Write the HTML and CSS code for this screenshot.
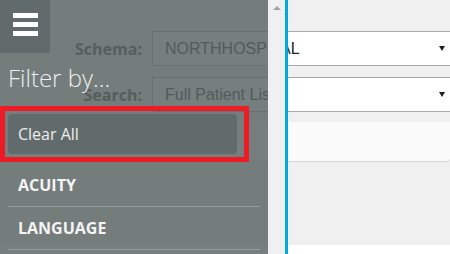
FILE: index.html
```html
<!DOCTYPE html>
<html>
<head>
    <title>Patient List</title>
    <meta charset="UTF-8">
    <link rel="stylesheet" href="styles.css">
</head>
<body>
    <div class="page">
        <div class="field">
            <label>Schema:</label>
            <div class="select"><span>NORTHHOSPITAL</span><span class="caret"></span></div>
        </div>
        <div class="field">
            <label>Search:</label>
            <div class="select"><span>Full Patient List</span><span class="caret"></span></div>
        </div>
        <div class="toolbar"></div>
        <div class="footer"></div>
    </div>

    <!-- filter drawer, sits over the page -->
    <div class="drawer">
        <div class="drawer-body">
            <div class="menu-btn">
                <span class="bar"></span>
                <span class="bar"></span>
                <span class="bar"></span>
            </div>
            <h2 class="drawer-title">Filter by...</h2>
            <div class="highlight">
                <button class="clear-btn">Clear All</button>
            </div>
            <ul class="filter-list">
                <li>ACUITY</li>
                <li>LANGUAGE</li>
            </ul>
        </div>
        <div class="scroll"><span class="scroll-up"></span></div>
        <div class="edge"></div>
    </div>
</body>
</html>
```

FILE: styles.css
```css
body {
    margin: 0;
    height: 254px;
    overflow: hidden;
    position: relative;
    background: #f0f0f0;
    font-family: "Open Sans", sans-serif;
}

.page {
    padding-top: 31px;
}
.field {
    display: flex;
    align-items: center;
    gap: 10px;
    margin-right: -10px;
    margin-bottom: 11px;
}
.field label {
    width: 142px;
    text-align: right;
    font-weight: 700;
    font-size: 16px;
    color: #333;
}
.select {
    flex: 1;
    height: 33px;
    border: 1px solid #a9a9a9;
    background: #fff;
    display: flex;
    align-items: center;
    justify-content: space-between;
    padding: 0 14px 0 12px;
    font-family: "Liberation Sans", Arial, sans-serif;
    font-size: 16px;
    color: #222;
}
.caret {
    width: 0;
    height: 0;
    border-left: 3px solid transparent;
    border-right: 3px solid transparent;
    border-top: 5px solid #222;
}
.toolbar {
    height: 39px;
    margin-top: -1px;
    background: #fafafa;
    border-bottom: 1px solid #d6d6d6;
    border-bottom-right-radius: 4px;
}
.footer {
    margin-top: 83px;
    height: 20px;
    background: #fff;
}

.drawer {
    position: absolute;
    top: 0;
    left: 0;
    bottom: 0;
    display: flex;
}
.drawer-body {
    width: 268px;
    background: rgba(92, 101, 101, 0.84);
}
.menu-btn {
    width: 50px;
    height: 53px;
    box-sizing: border-box;
    padding: 13px 12px 0 13px;
    background: #616b6b;
    display: flex;
    flex-direction: column;
    gap: 4px;
}
.bar {
    display: block;
    width: 25px;
    height: 5px;
    background: #fff;
}
.drawer-title {
    margin: 10px 0 0 8px;
    font-size: 24px;
    line-height: 30px;
    font-weight: 300;
    color: #eee;
}
.highlight {
    margin-top: 13px;
    width: 235px;
    border: 5px solid #ed1c24;
    padding: 2px;
}
.clear-btn {
    display: flex;
    align-items: center;
    width: 231px;
    height: 42px;
    padding: 0 0 0 10px;
    border: 1px solid #737e7e;
    border-radius: 5px;
    background: #616b6b;
    font-family: "Open Sans", sans-serif;
    font-size: 16px;
    color: #eee;
}
.filter-list {
    list-style: none;
    margin: 2px 8px 0;
    padding: 0;
}
.filter-list li {
    height: 42px;
    display: flex;
    align-items: center;
    padding-left: 10px;
    border-bottom: 1px solid #959c9c;
    font-weight: 700;
    font-size: 16px;
    color: #f4f4f4;
}
.scroll {
    width: 17px;
    background: #f0f0f0;
    display: flex;
    justify-content: center;
}
.scroll-up {
    margin-top: 6px;
    width: 0;
    height: 0;
    border-left: 4px solid transparent;
    border-right: 4px solid transparent;
    border-bottom: 4px solid #a3a3a3;
}
.edge {
    width: 3px;
    background: #00a9e0;
}
```
